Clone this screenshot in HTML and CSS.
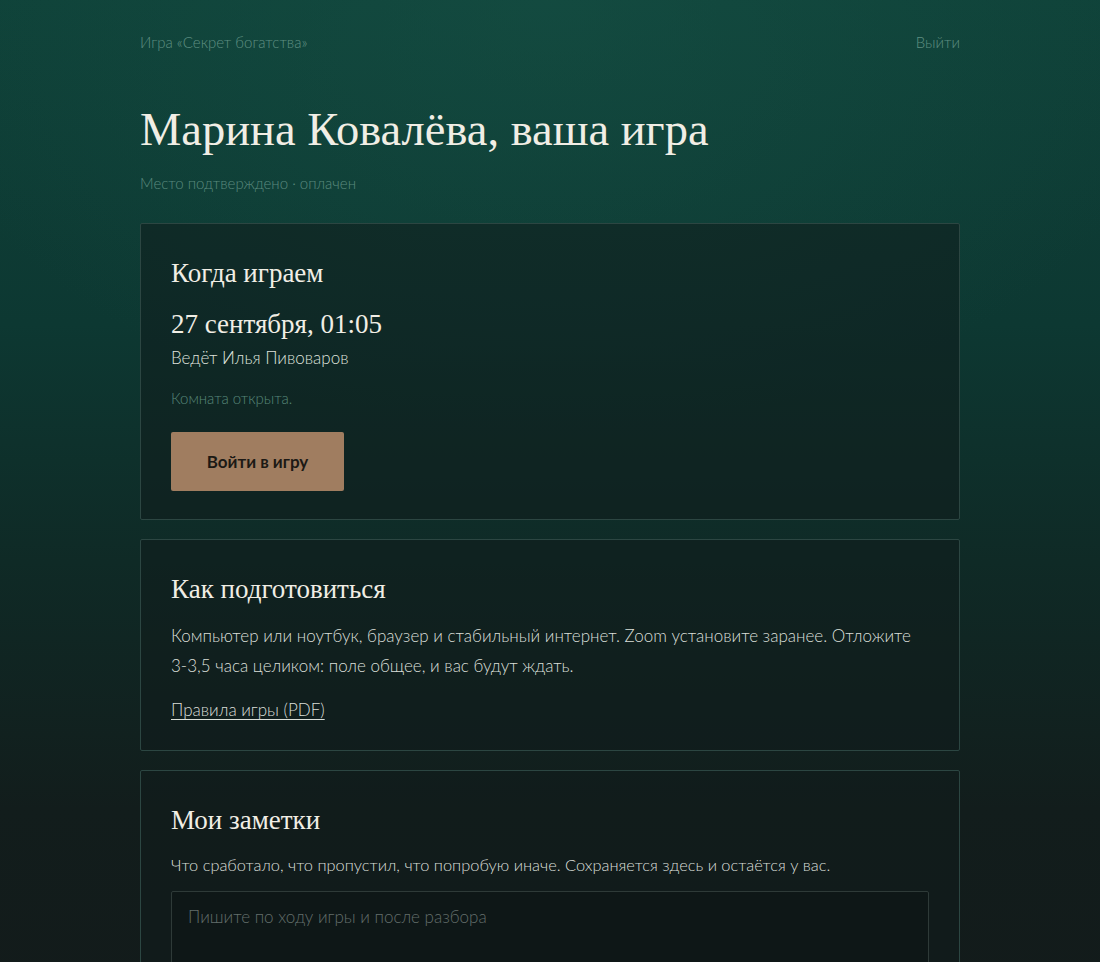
FILE: index.html
```html
<!DOCTYPE html>
<html lang="ru">
<head>
<meta charset="utf-8">
<title>Игра «Секрет богатства»</title>
<link rel="stylesheet" href="styles.css">
</head>
<body>
<div class="page">
  <header class="topbar">
    <span class="brand">Игра «Секрет богатства»</span>
    <a class="logout" href="#">Выйти</a>
  </header>
  <h1 class="title">Марина Ковалёва, ваша игра</h1>
  <p class="status">Место подтверждено · оплачен</p>

  <section class="card">
    <h2 class="card-title">Когда играем</h2>
    <p class="date">27 сентября, 01:05</p>
    <p class="host">Ведёт Илья Пивоваров</p>
    <p class="muted">Комната открыта.</p>
    <button class="btn">Войти в игру</button>
  </section>

  <section class="card card-prep">
    <h2 class="card-title">Как подготовиться</h2>
    <p class="text">Компьютер или ноутбук, браузер и стабильный интернет. Zoom установите заранее. Отложите 3-3,5 часа целиком: поле общее, и вас будут ждать.</p>
    <p class="text"><a class="link" href="#">Правила игры (PDF)</a></p>
  </section>

  <section class="card">
    <h2 class="card-title">Мои заметки</h2>
    <p class="text small">Что сработало, что пропустил, что попробую иначе. Сохраняется здесь и остаётся у вас.</p>
    <textarea class="notes" placeholder="Пишите по ходу игры и после разбора"></textarea>
  </section>
</div>
</body>
</html>
```
FILE: styles.css
```css
html, body {
  margin: 0;
  padding: 0;
}
body {
  min-height: 962px;
  font-family: "Lato", "Noto Sans", sans-serif;
  color: #d9ddd7;
  background:
    radial-gradient(ellipse 60% 40% at 50% 0%, rgba(24, 84, 72, 0.45), rgba(24, 84, 72, 0) 100%),
    linear-gradient(180deg, #0f4239 0%, #0d3832 30%, #0f2a26 52%, #121d1c 75%, #131a1a 100%),
    #131a1a;
}
.page {
  width: 820px;
  margin: 0 auto;
  padding-top: 33px;
}
.topbar {
  display: flex;
  justify-content: space-between;
  align-items: center;
  font-size: 15px;
  color: #5f8f82;
  font-weight: 300;
}
.logout {
  color: #5f8f82;
  text-decoration: none;
}
.title {
  margin: 49px 0 0;
  font-family: "Liberation Serif", "DejaVu Serif", serif;
  font-weight: 400;
  font-size: 46.5px;
  line-height: 60px;
  color: #f1eee5;
}
.status {
  margin: 14px 0 31px;
  font-size: 15px;
  font-weight: 300;
  color: #5a8a7e;
}
.card {
  border: 1px solid #2c4642;
  border-radius: 2px;
  background: rgba(16, 28, 27, 0.55);
  padding: 30px 30px 28px;
  margin-bottom: 19px;
}
.card-prep {
  padding-bottom: 25px;
}
.card-title {
  margin: 0;
  font-family: "Liberation Serif", "DejaVu Serif", serif;
  font-weight: 400;
  font-size: 27px;
  line-height: 38px;
  color: #f1eee5;
}
.date {
  margin: 14px 0 0;
  font-family: "Liberation Serif", "DejaVu Serif", serif;
  font-size: 27px;
  line-height: 36px;
  color: #f1eee5;
}
.host {
  margin: 4px 0 0;
  font-size: 17px;
  line-height: 24px;
  font-weight: 300;
  color: #dfe2dc;
}
.muted {
  margin: 19px 0 0;
  font-size: 15px;
  font-weight: 300;
  color: #578679;
}
.btn {
  margin-top: 25px;
  width: 173px;
  height: 59px;
  border: none;
  border-radius: 2px;
  background: #a07d60;
  color: #1c1915;
  font-family: "Lato", "Noto Sans", sans-serif;
  font-size: 17px;
  font-weight: 700;
  cursor: pointer;
}
.text {
  margin: 13px 0 0;
  font-size: 17px;
  line-height: 30px;
  font-weight: 300;
  color: #dadfd9;
}
.text + .text {
  margin-top: 14px;
}
.small {
  font-size: 16.4px;
  margin-top: 11px;
}
.link {
  color: #dadfd9;
  text-decoration: underline;
  text-underline-offset: 3px;
}
.notes {
  display: block;
  box-sizing: border-box;
  width: 100%;
  height: 140px;
  margin-top: 11px;
  padding: 14px 16px;
  border: 1px solid #2e3a38;
  border-radius: 2px;
  background: rgba(14, 22, 21, 0.6);
  color: #dadfd9;
  font-family: "Lato", "Noto Sans", sans-serif;
  font-size: 17px;
  font-weight: 300;
  resize: vertical;
}
.notes::placeholder {
  color: #636e6b;
}
```
